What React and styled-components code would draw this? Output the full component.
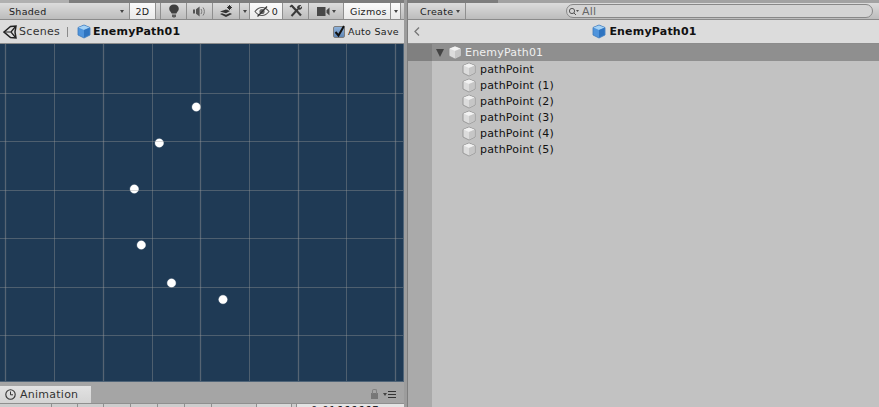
import styled, { createGlobalStyle } from "styled-components";

const FONT = `"DejaVu Sans", Verdana, sans-serif`;

const GlobalStyle = createGlobalStyle`
    html, body { margin: 0; padding: 0; }
    body { width: 879px; height: 407px; overflow: hidden; background: #a2a2a2; font-family: ${FONT}; }
`;

const Page = styled.div`
    display: flex;
    width: 879px;
    height: 407px;
    overflow: hidden;
`;

const LeftPanel = styled.section`
    width: 404px;
    display: flex;
    flex-direction: column;
    flex-shrink: 0;
`;

const Divider = styled.div`
    width: 4px;
    flex-shrink: 0;
    background: linear-gradient(90deg, #9c9c9c 3px, #7e7e7e 3px);
`;

const RightPanel = styled.section`
    flex: 1;
    display: flex;
    flex-direction: column;
    min-width: 0;
`;

const TopStrip = styled.div`
    height: 3px;
    flex-shrink: 0;
    display: flex;
    background: #a2a2a2;
`;

const StripPart = styled.div`
    width: ${(p) => p.$w}px;
    flex-shrink: 0;
    background: ${(p) => p.$c};
`;

const Toolbar = styled.div`
    height: 16px;
    flex-shrink: 0;
    display: flex;
    align-items: stretch;
    background: linear-gradient(#dcdcdc, #bcbcbc);
    border-bottom: 1px solid #8a8a8a;
    box-sizing: content-box;
    padding-left: ${(p) => p.$pad}px;
`;

const ToolButton = styled.div`
    width: ${(p) => p.$w}px;
    flex-shrink: 0;
    display: flex;
    align-items: center;
    justify-content: ${(p) => p.$between ? "space-between" : "center"};
    gap: 2px;
    box-sizing: border-box;
    padding: ${(p) => p.$between ? "0 5px 0 6px" : "0"};
    font-size: 9.5px;
    letter-spacing: 0.3px;
    color: #1c1c1c;
    background: ${(p) => p.$on ? "linear-gradient(#fbfbfb, #e9e9e9)" : "transparent"};
    border-right: 1px solid #8f8f8f;
`;

const Caret = styled.span`
    display: inline-block;
    width: 0;
    height: 0;
    flex-shrink: 0;
    border-left: 2.5px solid transparent;
    border-right: 2.5px solid transparent;
    border-top: 3px solid #444;
`;

const CaretCell = styled.div`
    width: ${(p) => p.$w}px;
    flex-shrink: 0;
    display: flex;
    align-items: center;
    justify-content: center;
    box-sizing: border-box;
    background: ${(p) => p.$on ? "linear-gradient(#fbfbfb, #e9e9e9)" : "transparent"};
    border-right: 1px solid #8f8f8f;
`;

const Crumbs = styled.div`
    height: 24px;
    flex-shrink: 0;
    display: flex;
    align-items: center;
    background: #dcdcdc;
    border-bottom: 1px solid #8c8c8c;
    box-sizing: border-box;
    font-size: 11px;
    color: #1a1a1a;
`;

const ScenesLink = styled.span`
    margin-left: 3px;
    display: flex;
    align-items: center;
    gap: 2px;
    letter-spacing: 0.3px;
    color: #333;
`;

const Sep = styled.span`
    width: 1px;
    height: 10px;
    margin: 0 9px 0 7px;
    background: #8a8a8a;
`;

const Title = styled.span`
    font-weight: 700;
    margin-left: 2px;
    letter-spacing: 0.2px;
    color: #111;
`;

const AutoSave = styled.label`
    margin-left: auto;
    margin-right: 5px;
    display: flex;
    align-items: center;
    font-size: 9.5px;
    letter-spacing: 0.3px;
    gap: 3px;
    color: #222;
`;

const CheckBox = styled.span`
    width: 12px;
    height: 12px;
    border-radius: 2px;
    background: linear-gradient(#8fb2da, #5e85b5);
    border: 1px solid #7d7d7d;
    position: relative;
    box-sizing: border-box;
    svg { position: absolute; left: -1px; top: -3px; }
`;

const Canvas = styled.div`
    height: 338px;
    flex-shrink: 0;
    background: #1f3a55;
    box-shadow: inset -1px -1px 0 #4f6478;
    svg { display: block; }
`;

const BottomBar = styled.div`
    flex: 1;
    display: flex;
    flex-direction: column;
    background: #a5a5a5;
    padding-top: 4px;
`;

const TabRow = styled.div`
    display: flex;
    align-items: center;
    height: 17px;
    flex-shrink: 0;
    padding-right: 8px;
`;

const Tab = styled.div`
    width: 91px;
    height: 17px;
    display: flex;
    align-items: center;
    gap: 4px;
    box-sizing: border-box;
    padding-left: 5px;
    background: linear-gradient(#e2e2e2, #d4d4d4);
    font-size: 11px;
    letter-spacing: 0.25px;
    color: #333;
`;

const TabTools = styled.div`
    margin-left: auto;
    display: flex;
    align-items: center;
    gap: 5px;
`;

const Lock = styled.span`
    width: 7px;
    height: 6px;
    margin-top: 3px;
    background: #777;
    position: relative;
    &::before {
        content: "";
        position: absolute;
        left: 1px;
        top: -4px;
        width: 3px;
        height: 4px;
        border: 1px solid #808080;
        border-bottom: 0;
        border-radius: 2px 2px 0 0;
    }
`;

const Menu = styled.span`
    display: flex;
    align-items: center;
    gap: 1px;
`;

const MenuLines = styled.span`
    width: 8px;
    height: 5px;
    border-top: 1px solid #333;
    border-bottom: 1px solid #333;
    position: relative;
    &::after {
        content: "";
        position: absolute;
        left: 0;
        right: 0;
        top: 2px;
        height: 1px;
        background: #333;
    }
`;

const TabBottom = styled.div`
    flex: 1;
    display: flex;
    align-items: stretch;
    overflow: hidden;
    background: #cdcdcd;
    border-top: 1px solid #8f8f8f;
`;

const BottomCell = styled.div`
    width: ${(p) => p.$w}px;
    flex-shrink: 0;
    box-sizing: border-box;
    background: ${(p) => p.$c || "transparent"};
    border-right: 1px solid ${(p) => p.$line || "#8f8f8f"};
`;

const TimeCell = styled.div`
    flex: 1;
    background: #e4e4e4;
    font-size: 10px;
    line-height: 12px;
    letter-spacing: 0.8px;
    padding: 1px 0 0 14px;
    white-space: nowrap;
    color: #222;
`;

const SearchWrap = styled.div`
    margin-left: auto;
    margin-right: 6px;
    margin-top: 1px;
    width: 307px;
    height: 14px;
    box-sizing: border-box;
    border: 1px solid #888;
    border-radius: 7px;
    background: #d4d4d4;
    display: flex;
    align-items: center;
    padding-left: 1px;
    gap: 2px;
    font-size: 11px;
    letter-spacing: 0.2px;
    color: #666;
`;

const CrumbCenter = styled.div`
    flex: 1;
    display: flex;
    align-items: center;
    justify-content: center;
    gap: 1px;
    padding-right: 10px;
`;

const Back = styled.span`
    margin-left: 6px;
    color: #777;
    display: flex;
`;

const Hierarchy = styled.div`
    flex: 1;
    display: flex;
    flex-direction: column;
    background: linear-gradient(90deg, #aaaaaa 24px, #c2c2c2 24px);
`;

const Row = styled.div`
    height: ${(p) => p.$root ? 17 : 16}px;
    flex-shrink: 0;
    display: flex;
    align-items: center;
    gap: ${(p) => p.$root ? 3 : 4}px;
    padding-left: ${(p) => p.$root ? 28 : 54}px;
    background: ${(p) => p.$root ? "linear-gradient(90deg, #808080 24px, #8f8f8f 24px)" : "transparent"};
    color: ${(p) => p.$root ? "#f0f0f0" : "#111"};
    font-size: 11px;
    letter-spacing: 0.2px;
`;

const Fold = styled.span`
    width: 0;
    height: 0;
    margin-right: 1px;
    border-left: 4.5px solid transparent;
    border-right: 4.5px solid transparent;
    border-top: 8px solid #444;
`;

const Cube = ({ blue }) => (
    <svg width="14" height="15" viewBox="0 0 14 15" style={{ flexShrink: 0 }}>
        <path d="M7 1 13 3.5V11L7 14 1 11V3.5Z" fill={blue ? "#4f94dc" : "#dcdcdc"} stroke={blue ? "#3c79ba" : "#8b8b8b"} strokeWidth="0.8" />
        <path d="M1.4 3.5 7 6 12.6 3.5 7 1.4Z" fill={blue ? "#a5d2f5" : "#f2f2f2"} />
        <path d="M7 6V13.5L12.6 10.8V3.8Z" fill={blue ? "#2f74c0" : "#c6c6c6"} />
    </svg>
);

const UnityMark = () => (
    <svg width="14" height="14" viewBox="0 0 14 14">
        <path d="M1 7 7.5 1.5 13 1 12 7 13 13 7.5 12.5Z" fill="none" stroke="#222" strokeWidth="1.5" />
        <path d="M1 7H8M8 7 12.5 1.5M8 7 12.5 12.5" stroke="#222" strokeWidth="1.2" fill="none" />
    </svg>
);

const BulbIcon = () => (
    <svg width="12" height="14" viewBox="0 0 12 14">
        <path d="M6 .5C3 .5 1.2 2.4 1.2 4.8 1.2 6.9 3 7.8 3.6 9.6H8.4C9 7.8 10.8 6.9 10.8 4.8 10.8 2.4 9 .5 6 .5Z" fill="#3f3f3f" />
        <path d="M4 10.5H8V12.3L7 13.4H5L4 12.3Z" fill="#5c5c5c" />
    </svg>
);

const SpeakerIcon = () => (
    <svg width="13" height="11" viewBox="0 0 13 11">
        <path d="M0 3.5H2V7.5H0ZM3 3.3 6.6 .5V10.5L3 7.7Z" fill="#555" />
        <path d="M8 3C9 4.3 9 6.7 8 8M10 1.5C11.8 3.6 11.8 7.4 10 9.5" fill="none" stroke="#777" strokeWidth="1" />
    </svg>
);

const LayersIcon = () => (
    <svg width="15" height="13" viewBox="0 0 15 13">
        <path d="M1 6.5 7 4.5 11 6 7 8.2ZM1 9 3 8.2 7 9.7 11 8 13 9 7 12Z" fill="#333" />
        <path d="M10.5 0V5M8 2.5H13M8.8 .8 12.2 4.2M12.2 .8 8.8 4.2" stroke="#333" strokeWidth="1" />
    </svg>
);

const HiddenIcon = () => (
    <svg width="16" height="11" viewBox="0 0 16 11">
        <path d="M1 5.5C3.5 2.2 6 1.5 8 1.5 10 1.5 12.5 2.2 15 5.5 12.5 8.8 10 9.5 8 9.5 6 9.5 3.5 8.8 1 5.5Z" fill="none" stroke="#555" strokeWidth="1.1" />
        <circle cx="8" cy="5.5" r="2.6" fill="#666" />
        <path d="M3.5 10.5 13 .5" stroke="#333" strokeWidth="1.2" />
    </svg>
);

const ToolsIcon = () => (
    <svg width="14" height="14" viewBox="0 0 14 14">
        <path d="M2.5 1.5 12 11.5" stroke="#3a3a3a" strokeWidth="2.2" />
        <path d="M1 3 3 1" stroke="#3a3a3a" strokeWidth="1.5" />
        <path d="M2.5 12 9 5" stroke="#3a3a3a" strokeWidth="2" />
        <path d="M8 3.8C8 1.8 10.3.4 12.3 1.2L10.4 3.1 11.2 4 13 2.2C13.6 4.2 11.8 6.4 9.6 5.7Z" fill="#3a3a3a" />
    </svg>
);

const CameraIcon = () => (
    <svg width="13" height="9" viewBox="0 0 13 9">
        <rect x="0" y="0" width="8.5" height="9" fill="#484848" />
        <path d="M9.5 3.2 12.5.5V8.5L9.5 5.8Z" fill="#484848" />
    </svg>
);

const ClockIcon = () => (
    <svg width="11" height="11" viewBox="0 0 11 11">
        <circle cx="5.5" cy="5.5" r="4.7" fill="none" stroke="#333" strokeWidth="1.1" />
        <path d="M5.5 2.5V5.8H8" fill="none" stroke="#333" strokeWidth="1" />
    </svg>
);

const Grid = () => {
    const minorX = [54, 152, 249, 346];
    const majorX = [5, 103, 200, 298, 395];
    const ys = [49, 97, 146, 194, 243, 291];
    const points = [[196.3, 63], [159.3, 99], [134.3, 145], [141.3, 201], [171.5, 239], [223, 255.5]];
    return (
        <svg width="403" height="337">
            {points.map(([x, y]) => <circle key={x} cx={x} cy={y} r="4.3" fill="#fff" stroke="#fff" strokeOpacity="0.3" />)}
            {minorX.map((x) => <line key={x} x1={x + 0.5} x2={x + 0.5} y1="0" y2="337" stroke="#9a9a9a" strokeOpacity="0.38" />)}
            {majorX.map((x) => <line key={x} x1={x + 0.5} x2={x + 0.5} y1="0" y2="337" stroke="#9a9a9a" strokeOpacity="0.45" strokeWidth="1.3" />)}
            {ys.map((y) => <line key={y} x1="0" x2="403" y1={y + 0.5} y2={y + 0.5} stroke="#9a9a9a" strokeOpacity="0.38" />)}
        </svg>
    );
};

const children = ["pathPoint", "pathPoint (1)", "pathPoint (2)", "pathPoint (3)", "pathPoint (4)", "pathPoint (5)"];

const App = () => (
    <Page>
        <GlobalStyle />
        <LeftPanel>
            <TopStrip>
                <StripPart $w={69} $c="#b0b0b0" />
                <StripPart $w={335} $c="#7d7d7d" />
            </TopStrip>
            <Toolbar $pad={3}>
                <ToolButton $w={127} $between>Shaded<Caret /></ToolButton>
                <ToolButton $w={26} $on>2D</ToolButton>
                <ToolButton $w={5} />
                <ToolButton $w={26}><BulbIcon /></ToolButton>
                <ToolButton $w={26}><SpeakerIcon /></ToolButton>
                <ToolButton $w={27}><LayersIcon /></ToolButton>
                <CaretCell $w={10}><Caret /></CaretCell>
                <ToolButton $w={33} $on><HiddenIcon />0</ToolButton>
                <ToolButton $w={26}><ToolsIcon /></ToolButton>
                <ToolButton $w={35}><CameraIcon /><Caret /></ToolButton>
                <ToolButton $w={47} $on $between>Gizmos</ToolButton>
                <CaretCell $w={10} $on><Caret /></CaretCell>
            </Toolbar>
            <Crumbs>
                <ScenesLink><UnityMark />Scenes</ScenesLink>
                <Sep />
                <Cube blue />
                <Title>EnemyPath01</Title>
                <AutoSave>
                    <CheckBox>
                        <svg width="13" height="14" viewBox="0 0 13 14"><path d="M2.5 8 5.5 11.5 11 2" fill="none" stroke="#111" strokeWidth="2" /></svg>
                    </CheckBox>
                    Auto Save
                </AutoSave>
            </Crumbs>
            <Canvas><Grid /></Canvas>
            <BottomBar>
                <TabRow>
                    <Tab><ClockIcon />Animation</Tab>
                    <TabTools>
                        <Lock />
                        <Menu><Caret /><MenuLines /></Menu>
                    </TabTools>
                </TabRow>
                <TabBottom>
                    <BottomCell $w={52} />
                    <BottomCell $w={26} />
                    <BottomCell $w={26} />
                    <BottomCell $w={27} />
                    <BottomCell $w={27} />
                    <BottomCell $w={27} />
                    <BottomCell $w={27} />
                    <BottomCell $w={45} />
                    <BottomCell $w={35} $c="#dadada" />
                    <BottomCell $w={5} />
                    <TimeCell>0.01666667</TimeCell>
                </TabBottom>
            </BottomBar>
        </LeftPanel>
        <Divider />
        <RightPanel>
            <TopStrip>
                <StripPart $w={90} $c="#7d7d7d" />
            </TopStrip>
            <Toolbar $pad={6}>
                <ToolButton $w={52} $between>Create<Caret /></ToolButton>
                <SearchWrap>
                    <svg width="12" height="9" viewBox="0 0 12 9"><circle cx="4" cy="4" r="2.6" fill="none" stroke="#555" /><path d="M6 6 8 8" stroke="#555" /><path d="M8 3h3L9.5 5Z" fill="#555" /></svg>
                    All
                </SearchWrap>
            </Toolbar>
            <Crumbs>
                <Back>
                    <svg width="6" height="9" viewBox="0 0 6 9"><path d="M5 .5 1 4.5 5 8.5" fill="none" stroke="#777" strokeWidth="1.3" /></svg>
                </Back>
                <CrumbCenter><Cube blue /><Title>EnemyPath01</Title></CrumbCenter>
            </Crumbs>
            <Hierarchy>
                <Row $root><Fold /><Cube />EnemyPath01</Row>
                {children.map((name) => <Row key={name}><Cube />{name}</Row>)}
            </Hierarchy>
        </RightPanel>
    </Page>
);

export default App;
